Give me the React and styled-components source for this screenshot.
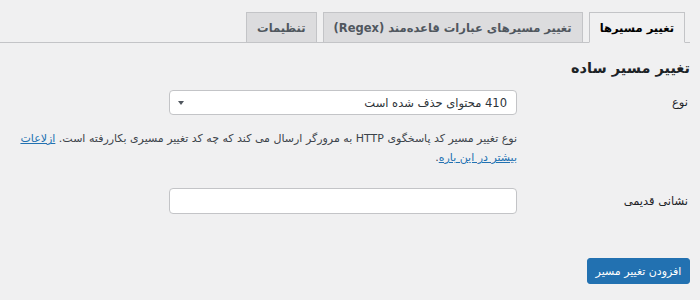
import React from "react";
import styled, { createGlobalStyle } from "styled-components";

const Global = createGlobalStyle`
  html, body { margin: 0; padding: 0; background: #f0f0f1; }
  body {
    direction: rtl;
    font-family: "DejaVu Sans", "Noto Sans", sans-serif;
    font-size: 12px;
    color: #3c434a;
    width: 700px;
    height: 300px;
    overflow: hidden;
  }
`;

const Wrap = styled.div`
  padding: 12px 10px 0 14px;
`;

const TabBar = styled.nav`
  display: flex;
  gap: 6px;
  border-bottom: 1px solid #c3c4c7;
  padding-right: 5px;
  margin-left: -14px;
  padding-left: 14px;
  height: 30px;
  align-items: flex-end;
`;

const Tab = styled.a`
  box-sizing: border-box;
  height: 31px;
  margin-bottom: -1px;
  padding: 0 10px;
  display: flex;
  align-items: center;
  font-weight: bold;
  font-size: 11.5px;
  text-decoration: none;
  border: 1px solid #c3c4c7;
  border-bottom-color: ${(p) => (p.$active ? "#f0f0f1" : "#c3c4c7")};
  background: ${(p) => (p.$active ? "#f0f0f1" : "#dcdcde")};
  color: ${(p) => (p.$active ? "#000" : "#50575e")};
  white-space: nowrap;
`;

const Heading = styled.h2`
  margin: 14px 0 0;
  font-size: 14.5px;
  font-weight: bold;
  color: #1d2327;
  line-height: 22px;
`;

const Row = styled.div`
  display: flex;
  align-items: ${(p) => (p.$top ? "flex-start" : "center")};
  margin-top: ${(p) => p.$mt}px;
`;

const Label = styled.label`
  width: 173px;
  flex: none;
  font-size: 11.5px;
  color: #1d2327;
  padding-right: 2px;
  padding-top: ${(p) => p.$pt || 0}px;
  box-sizing: border-box;
`;

const Field = styled.div`
  flex: 1;
  display: flex;
  flex-direction: column;
  align-items: flex-start;
`;

const Select = styled.div`
  box-sizing: border-box;
  width: 348px;
  height: 25px;
  border: 1px solid #c3c4c7;
  border-radius: 4px;
  background: #fff;
  display: flex;
  align-items: center;
  justify-content: space-between;
  padding: 0 9px 0 8px;
  font-size: 11.5px;
  color: #2c3338;
`;

const Arrow = styled.span`
  width: 0;
  height: 0;
  border-left: 3px solid transparent;
  border-right: 3px solid transparent;
  border-top: 4px solid #50575e;
`;

const Desc = styled.p`
  margin: 14px 0 0;
  font-size: 11px;
  line-height: 19px;
  color: #3c434a;
`;

const Link = styled.a`
  color: #2271b1;
  text-decoration: underline;
`;

const Input = styled.div`
  box-sizing: border-box;
  width: 348px;
  height: 26px;
  border: 1px solid #c3c4c7;
  border-radius: 4px;
  background: #fff;
`;

const Button = styled.button`
  margin-top: 44px;
  box-sizing: border-box;
  width: 103px;
  height: 26px;
  background: #2271b1;
  border: 1px solid #2271b1;
  border-radius: 3px;
  color: #fff;
  font-family: inherit;
  font-size: 11px;
  white-space: nowrap;
  padding: 0;
  cursor: pointer;
`;

export default function App() {
  return (
    <>
      <Global />
      <Wrap>
        <TabBar>
          <Tab $active>تغییر مسیرها</Tab>
          <Tab>تغییر مسیرهای عبارات قاعده‌مند (Regex)</Tab>
          <Tab>تنظیمات</Tab>
        </TabBar>
        <Heading>تغییر مسیر ساده</Heading>
        <Row $mt={11} $top>
          <Label $pt={5}>نوع</Label>
          <Field>
            <Select>
              <span>410 محتوای حذف شده است</span>
              <Arrow />
            </Select>
            <Desc>
              نوع تغییر مسیر کد پاسخگوی HTTP به مرورگر ارسال می کند که چه کد تغییر مسیری بکاررفته است.{" "}
              <Link href="#">ازلاعات بیشتر در این باره</Link>.
            </Desc>
          </Field>
        </Row>
        <Row $mt={21}>
          <Label>نشانی قدیمی</Label>
          <Field>
            <Input />
          </Field>
        </Row>
        <Button>افزودن تغییر مسیر</Button>
      </Wrap>
    </>
  );
}
